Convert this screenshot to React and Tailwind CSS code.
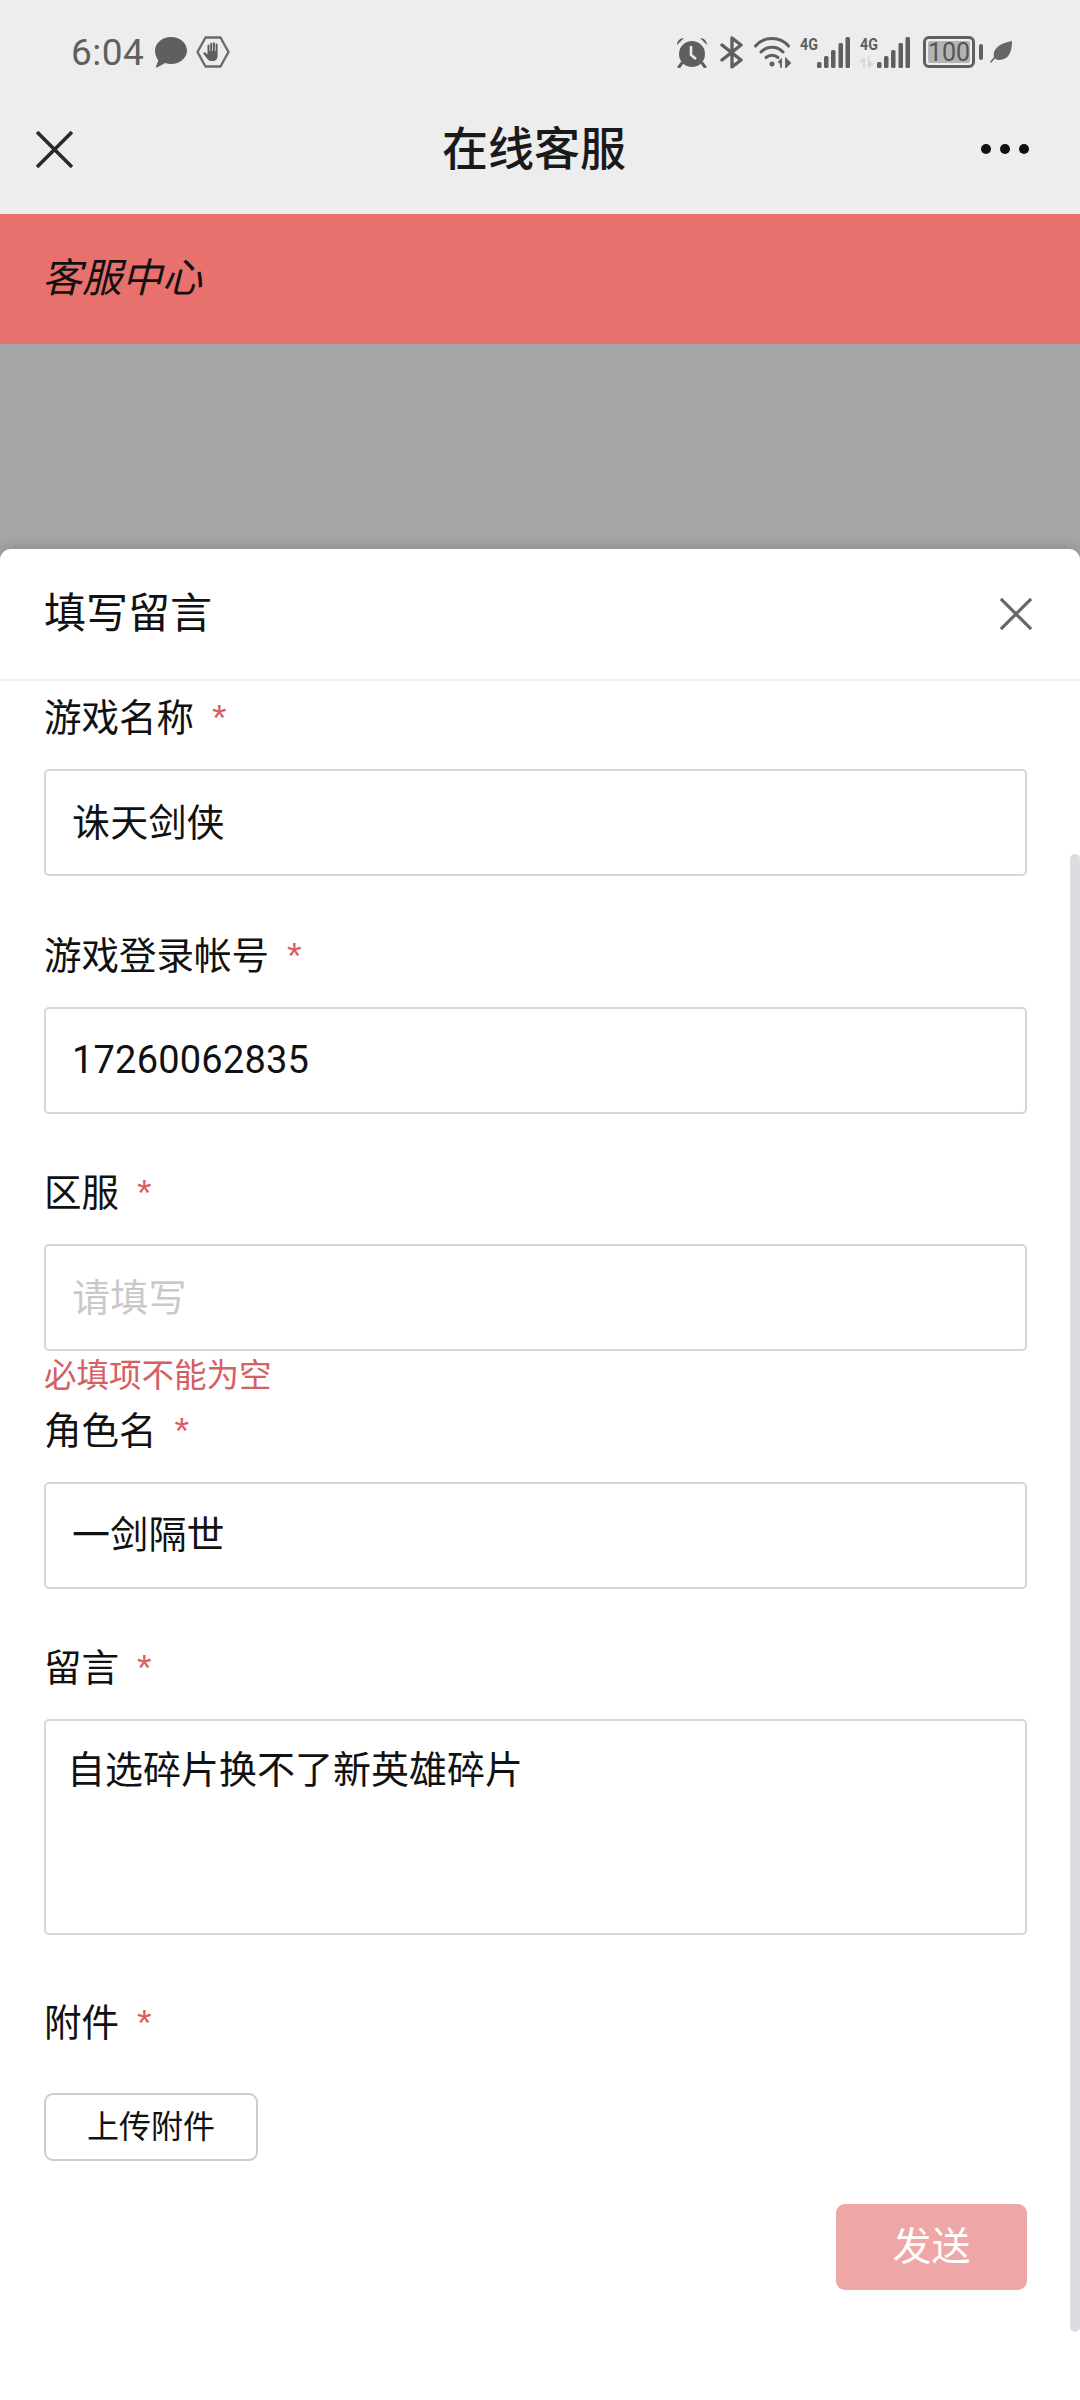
import React from 'react';

const cjk = "font-['Roboto','Noto_Sans_CJK_SC',sans-serif]";

const Cross = ({ className, strokeWidth = 3 }) => (
  <svg className={className} viewBox="0 0 36 36" fill="none" stroke="currentColor" strokeWidth={strokeWidth}>
    <path d="M1 1l34 34M35 1L1 35" />
  </svg>
);

const Signal = ({ faded }) => (
  <svg width="52" height="34" viewBox="0 0 52 34" fill="#5f5f5f">
    <text x="0" y="15" fontSize="17" fontWeight="700" fontFamily="Roboto" textLength="18" lengthAdjust="spacingAndGlyphs">4G</text>
    {faded && (
      <path d="M3 32v-6l-3 2v-2l4-3h1v9zM8 21h1.500v5l4 3-4 3h-1.500z" fill="#d4d4d4" />
    )}
    <rect x="17" y="27" width="4.500" height="6" rx="1.500" />
    <rect x="24" y="21" width="4.500" height="12" rx="1.500" />
    <rect x="31" y="15" width="4.500" height="18" rx="1.500" />
    <rect x="38.500" y="8" width="4.500" height="25" rx="1.500" />
    <rect x="45.500" y="2" width="4.500" height="31" rx="1.500" />
  </svg>
);

const StatusBar = () => (
  <div className="h-[104px] pl-[71px] pr-[68px] flex items-center justify-between text-[#5f5f5f]">
    <div className="flex items-center">
      <span className="text-[37px] leading-none font-['Roboto',sans-serif] tracking-[0.5px]">6:04</span>
      <svg className="ml-[11px]" width="32" height="31" viewBox="0 0 32 31" fill="#5f5f5f">
        <path d="M16 0c8.800 0 16 6 16 13.500S24.800 27 16 27c-2 0-4-.3-5.800-.9L2 30.500c-.8.200-1.300-.4-1-1l2.300-6.300C1.200 20.800 0 17.300 0 13.500 0 6 7.200 0 16 0z" />
      </svg>
      <svg className="ml-[9px]" width="34" height="32" viewBox="0 0 34 32">
        <path d="M9.500 1.500h15L32.500 16l-8 14.500h-15L1.500 16z" fill="none" stroke="#6b6b6b" strokeWidth="2.400" strokeLinejoin="round" />
        <path d="M11.500 9.500a1 1 0 012 0V15h.7V7.800a1 1 0 012 0V15h.7V7.200a1 1 0 012 0V15h.7V8.500a1 1 0 012 0V20c0 3-2 5-5 5h-1.500c-2 0-3-1-4-2.500L7.500 18c-.8-1.300 1-2.300 2.200-1.200l1.800 1.700z" fill="#5f5f5f" />
      </svg>
    </div>
    <div className="flex items-center">
      <svg width="32" height="31" viewBox="0 0 32 31" fill="#5f5f5f">
        <circle cx="16" cy="17" r="13" />
        <path d="M1 8c0-4 3-7 7-7zM31 8c0-4-3-7-7-7z" />
        <path d="M6 26l-3 4M26 26l3 4" stroke="#5f5f5f" strokeWidth="3" strokeLinecap="round" />
        <path d="M15 9v9l5 4" fill="none" stroke="#ededed" strokeWidth="2.500" />
      </svg>
      <svg className="ml-[12px]" width="24" height="33" viewBox="0 0 24 33" fill="none" stroke="#5f5f5f" strokeWidth="3.400" strokeLinejoin="round" strokeLinecap="round">
        <path d="M2 9l19 15-9 7V2l9 7L2 24" />
      </svg>
      <svg className="ml-[10px]" width="38" height="32" viewBox="0 0 38 32" fill="none" stroke="#5f5f5f" strokeWidth="3" strokeLinecap="round">
        <path d="M1.500 10C10 0 26 0 34.500 10" />
        <path d="M7 16c6-6.500 16-6.500 22 0" />
        <path d="M12 21.500c3.500-3 8.500-3 12 0" />
        <circle cx="18" cy="28" r="2.500" fill="#5f5f5f" stroke="none" />
        <path d="M27 31v-7l-2 2M32 23v8l4-4z" strokeWidth="1.800" fill="#5f5f5f" />
      </svg>
      <div className="ml-[8px]"><Signal /></div>
      <div className="ml-[8px]"><Signal faded /></div>
      <div className="ml-[11px] relative w-[52px] h-[32px] rounded-[6px] border-[3px] border-[#5f5f5f]">
        <div className="absolute left-[2px] top-[2px] bottom-[2px] right-[2px] bg-[#b4b4b4] rounded-[2px]" />
        <span className="absolute inset-0 flex items-center justify-center text-[25px] leading-none font-['Roboto',sans-serif] text-[#555555]">100</span>
      </div>
      <div className="ml-[4px] w-[4px] h-[16px] rounded-[2px] bg-[#5f5f5f]" />
      <svg className="ml-[7px]" width="22" height="23" viewBox="0 0 22 23" fill="#666666">
        <path d="M22 0c0 11-3 18-12 19-2 0-4-.5-5-1.500L1 22l-1-1 4-5C2 8 10 2 22 0z" />
      </svg>
    </div>
  </div>
);

const NavBar = () => (
  <div className="h-[90px] pl-[36px] pr-[51px] flex items-center justify-between">
    <Cross className="w-[37px] h-[37px] text-[#2a2a2a]" strokeWidth={3.500} />
    <div className="ml-[14px] text-[46px] leading-none font-medium text-[#1a1a1a]">在线客服</div>
    <div className="flex gap-[9px]">
      <span className="w-[10px] h-[10px] rounded-full bg-[#111111]" />
      <span className="w-[10px] h-[10px] rounded-full bg-[#111111]" />
      <span className="w-[10px] h-[10px] rounded-full bg-[#111111]" />
    </div>
  </div>
);

const Label = ({ children }) => (
  <div className="h-[50px] flex items-center text-[37.500px] leading-none text-[#111111]">
    {children}
    <span className="ml-[18px] text-[#d9605f] font-['Liberation_Sans',sans-serif]">*</span>
  </div>
);

const Field = ({ label, value, placeholder, error }) => (
  <div className="h-[237.500px]">
    <Label>{label}</Label>
    <div className={`mt-[25px] h-[107px] rounded-[5px] border-2 border-[#d6d6d6] pl-[26px] pr-[28px] flex items-center text-[38px] leading-none tracking-[0.2px] ${value ? 'text-[#111111]' : 'text-[#c9c9c9]'}`}>
      {value || placeholder}
    </div>
    {error && <div className="mt-[5px] text-[32.500px] leading-[40px] text-[#d4605f]">{error}</div>}
  </div>
);

const Sheet = () => (
  <div className="h-[1851px] bg-white rounded-t-[11px] shadow-[0_-3px_14px_rgba(0,0,0,0.14)] flex flex-col relative">
    <div className="h-[132px] shrink-0 border-b-2 border-[#eeeeee] pl-[44px] pr-[48px] flex items-center justify-between">
      <div className="text-[42px] leading-none text-[#111111]">填写留言</div>
      <Cross className="w-[32px] h-[32px] text-[#666666]" strokeWidth={3.500} />
    </div>
    <div className="flex-1 pl-[44px] pr-[53px] pt-[13px] relative">
      <Field label="游戏名称" value="诛天剑侠" />
      <Field label="游戏登录帐号" value="17260062835" />
      <Field label="区服" placeholder="请填写" error="必填项不能为空" />
      <Field label="角色名" value="一剑隔世" />
      <Label>留言</Label>
      <div className="mt-[25px] h-[216px] rounded-[5px] border-2 border-[#d6d6d6] pl-[21px] pr-[28px] pt-[26px] text-[38px] leading-[46px] text-[#111111]">
        自选碎片换不了新英雄碎片
      </div>
      <div className="mt-[64px]"><Label>附件</Label></div>
      <button className="mt-[44px] block w-[214px] h-[68px] rounded-[9px] border-2 border-[#cccccc] text-[32px] leading-none text-[#111111]">
        上传附件
      </button>
      <div className="mt-[43px] flex justify-end">
        <button className="w-[191px] h-[86px] rounded-[9px] bg-[#eea6a6] text-[39px] leading-none text-white">发送</button>
      </div>
    </div>
    <div className="absolute right-0 top-[305px] w-[10px] h-[1478px] rounded-[5px] bg-[#dcdde0]" />
  </div>
);

export default function App() {
  return (
    <div className={`w-[1080px] h-[2400px] overflow-hidden flex flex-col bg-[#a5a6a8] ${cjk}`}>
      <div className="h-[214px] shrink-0 bg-[#ededed]">
        <StatusBar />
        <NavBar />
      </div>
      <div className="h-[130px] shrink-0 bg-[#e8706d] pl-[42px] flex items-center text-[40px] leading-none italic text-[#111111]">
        客服中心
      </div>
      <div className="h-[205px] shrink-0" />
      <Sheet />
    </div>
  );
}
